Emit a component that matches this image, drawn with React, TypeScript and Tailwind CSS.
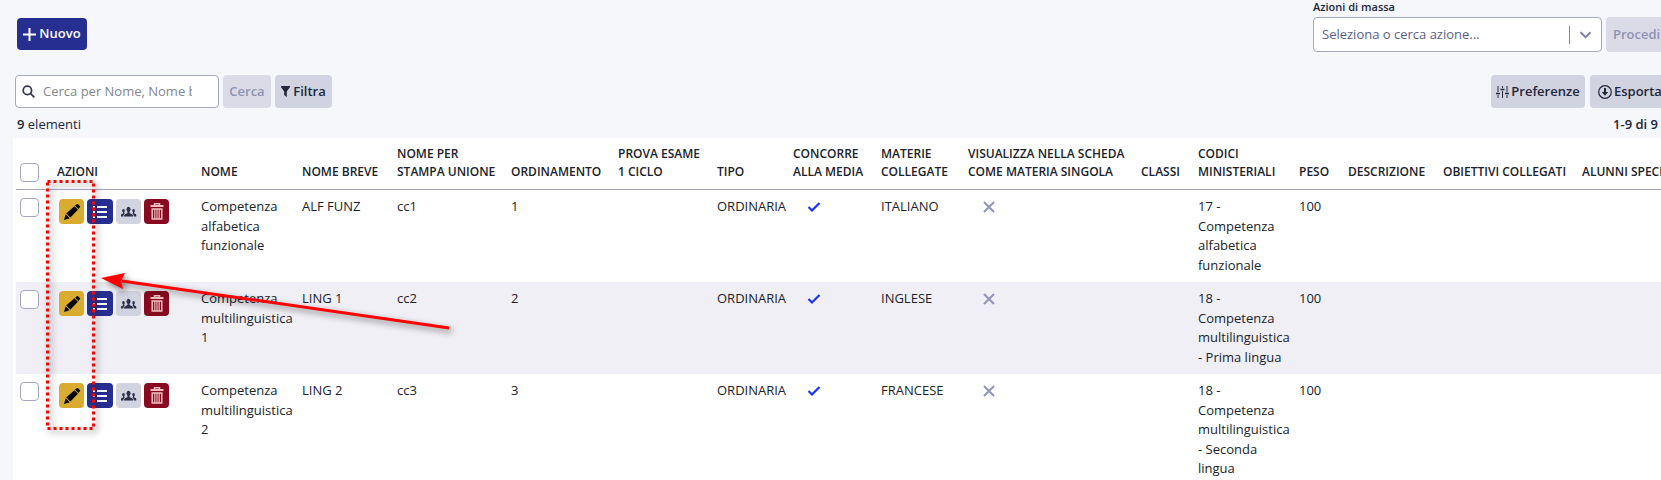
import React from "react";

type Row = {
  nome: string;
  breve: string;
  stampa: string;
  ordine: number;
  materia: string;
  codice: string;
};

const rows: Row[] = [
  { nome: "Competenza alfabetica funzionale", breve: "ALF FUNZ", stampa: "cc1", ordine: 1, materia: "ITALIANO", codice: "17 - Competenza alfabetica funzionale" },
  { nome: "Competenza multilinguistica 1", breve: "LING 1", stampa: "cc2", ordine: 2, materia: "INGLESE", codice: "18 - Competenza multilinguistica - Prima lingua" },
  { nome: "Competenza multilinguistica 2", breve: "LING 2", stampa: "cc3", ordine: 3, materia: "FRANCESE", codice: "18 - Competenza multilinguistica - Seconda lingua" },
];

const columns: { label: string; width: string }[] = [
  { label: "AZIONI", width: "w-[144px]" },
  { label: "NOME", width: "w-[101px]" },
  { label: "NOME BREVE", width: "w-[95px]" },
  { label: "NOME PER STAMPA UNIONE", width: "w-[114px]" },
  { label: "ORDINAMENTO", width: "w-[107px]" },
  { label: "PROVA ESAME 1 CICLO", width: "w-[99px]" },
  { label: "TIPO", width: "w-[76px]" },
  { label: "CONCORRE ALLA MEDIA", width: "w-[88px]" },
  { label: "MATERIE COLLEGATE", width: "w-[87px]" },
  { label: "VISUALIZZA NELLA SCHEDA COME MATERIA SINGOLA", width: "w-[173px]" },
  { label: "CLASSI", width: "w-[57px]" },
  { label: "CODICI MINISTERIALI", width: "w-[101px]" },
  { label: "PESO", width: "w-[49px]" },
  { label: "DESCRIZIONE", width: "w-[95px]" },
  { label: "OBIETTIVI COLLEGATI", width: "w-[139px] whitespace-nowrap" },
  { label: "ALUNNI SPECIALI", width: "w-[150px] whitespace-nowrap" },
];

const PencilIcon = () => (
  <svg viewBox="0 0 18 18" className="size-[18px]" fill="currentColor" aria-hidden="true">
    <path d="m12.100 2.700 1.600-1.500q.7-.6 1.400 0l1.800 1.700q.7.7 0 1.400l-1.500 1.700Z" />
    <path d="m11.400 3.200 3.500 3.500-7.500 7.900-4.200-4.200Z" />
    <path d="m2.700 11.200 4 4L1 17Z" />
  </svg>
);

const ListIcon = () => (
  <svg viewBox="0 0 14 12" className="h-3 w-[14px]" fill="currentColor" aria-hidden="true">
    <path d="M0 0h2v2H0zM4 0h10v2H4zM0 5h2v2H0zM4 5h10v2H4zM0 10h2v2H0zM4 10h10v2H4z" />
  </svg>
);

const GroupIcon = () => (
  <svg viewBox="0 0 18 12" className="h-3 w-[18px]" fill="currentColor" aria-hidden="true">
    <ellipse cx="8.5" cy="3.2" rx="2" ry="2.5" />
    <path d="M7.5 5h2v2l3 1.4q.6.4.6 2.1H4q0-1.700.6-2.100l2.900-1.400Z" />
    <ellipse cx="3.500" cy="4.700" rx="1.300" ry="1.600" />
    <path d="M3 6h1.200v1.300l.600.300Q3.300 8.400 3.200 10.500H1Q.900 8.500 1.500 8.100L3 7.400Z" />
    <ellipse cx="13.600" cy="4.700" rx="1.300" ry="1.600" />
    <path d="M13 6h1.200v1.400l1.600.700q.600.400.500 2.400h-2.400q0-2-1.600-2.900l.700-.300Z" />
  </svg>
);

const TrashIcon = () => (
  <svg viewBox="0 0 14 18" className="h-[18px] w-[14px]" fill="none" stroke="currentColor" aria-hidden="true">
    <path d="M.5 3h13" strokeWidth="2" />
    <path d="M4.500 2v-1.200h5V2M2.200 6v10h9.600V6Z" strokeWidth="1.500" />
    <path d="M4.800 6v10M7 6v10M9.200 6v10" strokeWidth="1.200" />
  </svg>
);

const CheckIcon = () => (
  <svg viewBox="0 0 14 12" className="h-3 w-[14px]" fill="none" stroke="#1a35f0" strokeWidth="2.200" role="img" aria-label="Sì">
    <path d="m1.500 6 3.500 3.500 7.500-7.500" />
  </svg>
);

const CrossIcon = () => (
  <svg viewBox="0 0 12 12" className="size-3" fill="none" stroke="#9396b8" strokeWidth="2.200" role="img" aria-label="No">
    <path d="m1 1 10 10M11 1 1 11" />
  </svg>
);

const buttonBase = "flex items-center justify-center rounded-[4px] font-semibold whitespace-nowrap";
const actionBase = "flex h-[25px] items-center justify-center rounded-[4px]";
const tick = "block size-[19px] appearance-none rounded-[4px] border border-[#a5a6c4] bg-white";

export default function App() {
  return (
    <div className="relative h-screen overflow-hidden bg-[#f6f7fb] font-['Open_Sans','Noto_Sans',sans-serif] text-[13px] leading-normal text-[#23263b]">
      <div className="flex items-start justify-between pl-[17px]">
        <button className={`${buttonBase} mt-[18px] h-8 w-[70px] gap-[3px] bg-[#262f91] text-white`}>
          <svg viewBox="0 0 13 13" className="size-[13px]" fill="none" stroke="currentColor" strokeWidth="2" aria-hidden="true">
            <path d="M6.500 0v13M0 6.500h13" />
          </svg>
          Nuovo
        </button>
        <div className="w-[348px] shrink-0">
          <label htmlFor="azioni" className="block h-[17px] text-[11px] leading-[14px] font-semibold">Azioni di massa</label>
          <div className="flex gap-1">
            <div className="relative h-[35px] w-[289px] shrink-0">
              <select id="azioni" className="h-full w-full appearance-none rounded-[4px] border border-[#a5a6c4] bg-white px-2 text-[#5a5d85]">
                <option>Seleziona o cerca azione...</option>
              </select>
              <div className="pointer-events-none absolute inset-y-0 right-[10px] flex items-center gap-[9px]">
                <span className="h-[18px] w-px bg-[#83869f]" />
                <svg viewBox="0 0 13 8" className="h-2 w-[13px]" fill="none" stroke="#7f82a8" strokeWidth="2" aria-hidden="true">
                  <path d="m1.500 1.200 5 5 5-5" />
                </svg>
              </div>
            </div>
            <button className={`${buttonBase} h-[35px] w-[67px] shrink-0 justify-start bg-[#dbdbe7] pl-[7px] text-[#8f92b4]`}>Procedi</button>
          </div>
        </div>
      </div>

      <div className="mt-[23px] flex justify-between pl-[15px]">
        <div className="flex gap-1">
          <label className="flex h-[33px] w-[204px] items-center gap-2 rounded-[4px] border border-[#a5a6c4] bg-white pl-[6px]">
            <svg viewBox="0 0 14 14" className="size-[13px] shrink-0" fill="none" stroke="#34374f" strokeWidth="1.900" aria-hidden="true">
              <circle cx="5.800" cy="5.800" r="4.500" />
              <path d="m9 9 4.300 4.300" />
            </svg>
            <input aria-label="Cerca" placeholder="Cerca per Nome, Nome breve" className="w-[149px] bg-transparent outline-none placeholder:text-[#85868c]" />
          </label>
          <button className={`${buttonBase} h-[33px] w-12 bg-[#dbdbe7] text-[#8f92b4]`}>Cerca</button>
          <button className={`${buttonBase} h-[33px] w-[57px] gap-[3px] bg-[#d1d3e0]`}>
            <svg viewBox="0 0 9 11" className="h-[11px] w-[9px]" fill="currentColor" aria-hidden="true">
              <path d="M0 0h9v1L5.800 5.500V11L3.200 9V5.500L0 1Z" />
            </svg>
            Filtra
          </button>
        </div>
        <div className="flex w-[170px] shrink-0 gap-[5px]">
          <button className={`${buttonBase} h-[33px] w-[94px] shrink-0 gap-[2px] bg-[#d1d3e0]`}>
            <svg viewBox="0 0 13 12" className="h-3 w-[13px] shrink-0" fill="none" stroke="currentColor" aria-hidden="true">
              <path d="M2 0v6M2 9v3M6.500 0v2M6.500 5v7M11 0v6M11 9v3" strokeWidth="1" />
              <path d="M0 7.500h4M4.500 3.500h4M9 7.500h4" strokeWidth="1.400" />
            </svg>
            Preferenze
          </button>
          <button className={`${buttonBase} h-[33px] w-[82px] shrink-0 justify-start gap-[2px] bg-[#d1d3e0] pl-2`}>
            <svg viewBox="0 0 14 14" className="size-[14px]" fill="none" stroke="currentColor" strokeWidth="1.200" aria-hidden="true">
              <circle cx="7" cy="7" r="6.300" />
              <path d="M7 3v6" strokeWidth="2" />
              <path d="M3.800 7h6.400L7 10.700Z" fill="currentColor" stroke="none" />
            </svg>
            Esporta
          </button>
        </div>
      </div>

      <div className="mt-[7px] flex h-[23px] justify-between pr-[3px] pl-[17px]">
        <p><span className="font-semibold">9</span> elementi</p>
        <p className="font-semibold">1-9 di 9</p>
      </div>

      <div className="ml-[13px] bg-white pl-[3px] text-[#20222a]">
        <table className="w-full min-w-[1707px] table-fixed border-collapse text-left">
          <thead>
            <tr className="h-[51px] border-b border-[#a5a6c4] align-bottom text-[12px] leading-[18px]">
              <th className="w-8 pb-[7px] pl-1"><input type="checkbox" aria-label="Seleziona tutto" className={tick} /></th>
              {columns.map((c) => (
                <th key={c.label} className={`${c.width} pt-[7px] pb-[8px] pl-[9px] font-semibold`}>{c.label}</th>
              ))}
            </tr>
          </thead>
          <tbody>
            {rows.map((r) => (
              <tr key={r.breve} className="h-[92px] align-top even:bg-[#f0eff5] [&>td]:py-[7px] [&>td]:pl-[9px]">
                <th className="pt-[8px] pl-1"><input type="checkbox" aria-label={`Seleziona ${r.nome}`} className={tick} /></th>
                <td>
                  <div className="mt-[2px] ml-[2px] flex gap-[3px]">
                    <button aria-label="Modifica" className={`${actionBase} w-[25px] bg-[#d9ac30] text-black`}><PencilIcon /></button>
                    <button aria-label="Dettagli" className={`${actionBase} w-[26px] bg-[#262f91] text-white`}><ListIcon /></button>
                    <button aria-label="Alunni" className={`${actionBase} w-[25px] bg-[#d1d3e0] text-[#2c2f45]`}><GroupIcon /></button>
                    <button aria-label="Elimina" className={`${actionBase} w-[25px] bg-[#870a1e] text-[#f3bcc0]`}><TrashIcon /></button>
                  </div>
                </td>
                <td>{r.nome}</td>
                <td>{r.breve}</td>
                <td>{r.stampa}</td>
                <td>{r.ordine}</td>
                <td />
                <td>ORDINARIA</td>
                <td><div className="flex h-5 items-center pl-[14px]"><CheckIcon /></div></td>
                <td>{r.materia}</td>
                <td><div className="flex h-5 items-center pl-[15px]"><CrossIcon /></div></td>
                <td />
                <td>{r.codice}</td>
                <td>100</td>
                <td />
                <td />
                <td />
              </tr>
            ))}
          </tbody>
        </table>
      </div>

      <svg viewBox="0 0 460 440" className="pointer-events-none absolute top-0 left-0 h-[440px] w-[460px] drop-shadow-[3px_3px_3px_rgba(0,0,0,0.5)]" aria-hidden="true">
        <rect x="47.500" y="181.500" width="46" height="247" fill="none" stroke="#ff0000" strokeWidth="3" strokeDasharray="3 3" />
        <path d="M122 281 449 328" stroke="#ff0000" strokeWidth="3" />
        <path d="m101 278 24-5-4 8 2 8Z" fill="#ff0000" />
      </svg>
    </div>
  );
}
